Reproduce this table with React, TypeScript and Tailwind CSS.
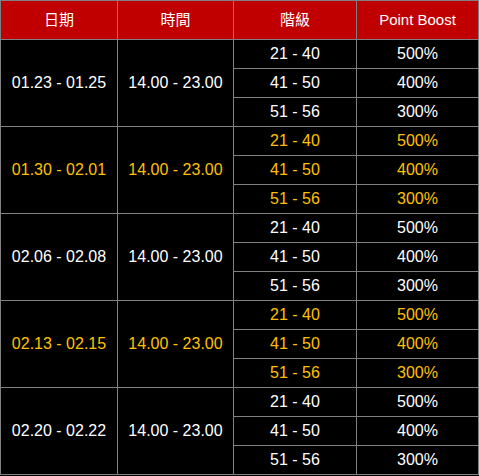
import React from 'react';

// 各期間の設定
interface Period {
  date: string;
  time: string;
  highlight: boolean;
}

const periods: Period[] = [
  { date: '01.23 - 01.25', time: '14.00 - 23.00', highlight: false },
  { date: '01.30 - 02.01', time: '14.00 - 23.00', highlight: true },
  { date: '02.06 - 02.08', time: '14.00 - 23.00', highlight: false },
  { date: '02.13 - 02.15', time: '14.00 - 23.00', highlight: true },
  { date: '02.20 - 02.22', time: '14.00 - 23.00', highlight: false },
];

const tiers = [
  { level: '21 - 40', boost: '500%' },
  { level: '41 - 50', boost: '400%' },
  { level: '51 - 56', boost: '300%' },
];

export default function App() {
  return (
    <div className="w-[479px] h-[476px] bg-black" style={{ fontFamily: '"Liberation Sans", Arial, "Noto Sans CJK TC", sans-serif' }}>
      <table className="table-fixed border-collapse w-[478px] border border-[#808080] bg-black text-center">
        <colgroup>
          <col className="w-[117px]" />
          <col className="w-[116px]" />
          <col className="w-[123px]" />
          <col className="w-[122px]" />
        </colgroup>
        <thead>
          <tr className="h-[39px] bg-[#c00000] text-white text-[15px]">
            <th className="border border-[#808080] font-normal p-0">日期</th>
            <th className="border border-[#808080] font-normal p-0">時間</th>
            <th className="border border-[#808080] font-normal p-0">階級</th>
            <th className="border border-[#808080] font-normal p-0">Point Boost</th>
          </tr>
        </thead>
        <tbody className="text-[16px]">
          {periods.map((p) =>
            tiers.map((t, i) => (
              <tr
                key={p.date + t.level}
                className={`h-[29px] ${p.highlight ? 'text-[#ffc000]' : 'text-white'}`}
              >
                {i === 0 && (
                  <>
                    <td rowSpan={3} className="border border-[#808080] p-0">{p.date}</td>
                    <td rowSpan={3} className="border border-[#808080] p-0">{p.time}</td>
                  </>
                )}
                <td className="border border-[#808080] p-0">{t.level}</td>
                <td className="border border-[#808080] p-0">{t.boost}</td>
              </tr>
            ))
          )}
        </tbody>
      </table>
    </div>
  );
}
